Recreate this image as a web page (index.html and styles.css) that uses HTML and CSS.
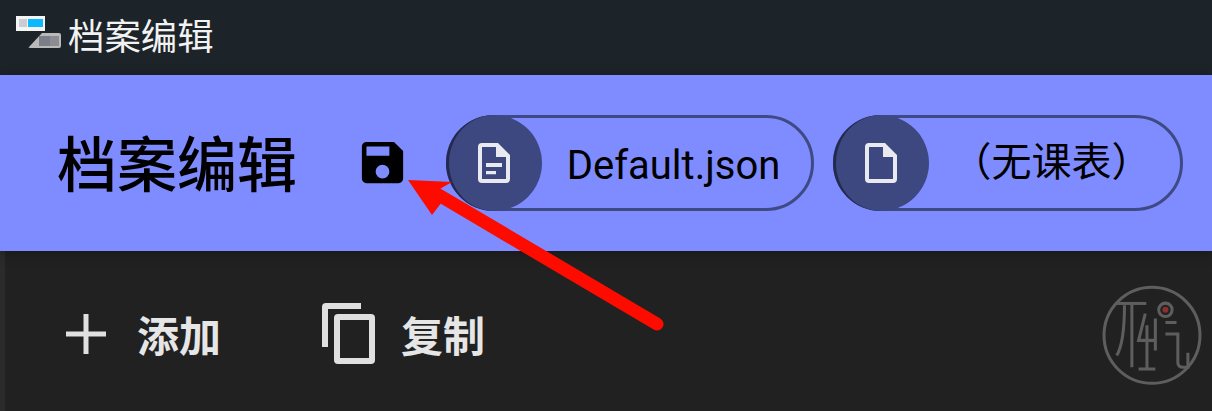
FILE: index.html
```html
<!DOCTYPE html>
<html>
<head>
    <title>档案编辑</title>
    <link rel="stylesheet" href="styles.css">
</head>
<body>
    <div class="titlebar">
        <svg class="app-icon" width="46" height="36" viewBox="0 0 46 36">
            <rect x="0" y="0" width="29" height="15" fill="#f4f4f4"/>
            <rect x="3" y="3" width="8" height="8" fill="#c9ccd4"/>
            <rect x="12" y="3" width="15" height="8" fill="#0cb8ff"/>
            <rect x="12" y="17" width="33" height="15" rx="2" fill="#b9b9b9"/>
            <path d="M12 32 L26 17 H12 Z" fill="#1c2329"/>
            <rect x="23" y="20" width="11" height="10" fill="#7b7e88"/>
            <rect x="34" y="20" width="9" height="10" fill="#8c8d92"/>
        </svg>
        <span class="app-title">档案编辑</span>
    </div>

    <div class="toolbar">
        <h1 class="page-title">档案编辑</h1>
        <svg class="save-icon" width="55" height="55" viewBox="0 0 24 24">
            <path fill-rule="evenodd" d="M17 3H5a2 2 0 0 0-2 2v14a2 2 0 0 0 2 2h14a2 2 0 0 0 2-2V7l-4-4zM12 19a3 3 0 1 1 0-6 3 3 0 0 1 0 6zM15 9H5V5h10v4z"/>
        </svg>
        <div class="chip chip-file">
            <span class="chip-icon">
                <svg width="48" height="48" viewBox="0 0 24 24">
                    <path fill-rule="evenodd" d="M6 2h8l6 6v12a2 2 0 0 1-2 2H6a2 2 0 0 1-2-2V4a2 2 0 0 1 2-2zM6 4v16h12V9h-5V4zM8 12h8v2H8zM8 16h5v1.6H8z"/>
                </svg>
            </span>
            <span class="chip-label">Default.json</span>
        </div>
        <div class="chip chip-table">
            <span class="chip-icon">
                <svg width="48" height="48" viewBox="0 0 24 24">
                    <path fill-rule="evenodd" d="M6 2h8l6 6v12a2 2 0 0 1-2 2H6a2 2 0 0 1-2-2V4a2 2 0 0 1 2-2zM6 4v16h12V9h-5V4z"/>
                </svg>
            </span>
            <span class="chip-label">（无课表）</span>
        </div>
    </div>

    <div class="content">
        <div class="action action-add">
            <svg width="40" height="40" viewBox="0 0 40 40">
                <path d="M17.5 0h5v17.5H40v5H22.5V40h-5V22.5H0v-5h17.5z"/>
            </svg>
            <span>添加</span>
        </div>
        <div class="action action-copy">
            <svg width="54" height="62" viewBox="0 0 54 62">
                <path d="M39 0v6H6v38H0V4a4 4 0 0 1 4-4z"/>
                <path fill-rule="evenodd" d="M16 11h33a4 4 0 0 1 4 4v42a4 4 0 0 1-4 4H16a4 4 0 0 1-4-4V15a4 4 0 0 1 4-4zM18 17v38h29V17z"/>
            </svg>
            <span>复制</span>
        </div>
        <svg class="seal" width="100" height="100" viewBox="36 30 298 298">
            <g fill="none" stroke="#5e5e5e" stroke-width="9">
                <circle cx="185" cy="180" r="143"/>
                <path d="M78 85H168"/>
                <path d="M103 90C103 150 100 205 80 240"/>
                <path d="M125 88V275"/>
                <path d="M165 115L145 195H195"/>
                <path d="M170 150V278M145 280H195M195 130V225"/>
                <path d="M225 142H258M225 176H262V260Q262 275 278 275H292V232"/>
                <circle cx="225" cy="104" r="20"/>
            </g>
            <circle cx="225" cy="104" r="9" fill="#8c2f2f"/>
        </svg>
    </div>

    <svg class="arrow" width="1212" height="411" viewBox="0 0 1212 411">
        <path d="M437 194L657 324" stroke="#fe0b00" stroke-width="13" stroke-linecap="round"/>
        <path d="M408 180L452 182L438 190L445 198L432 215Z" fill="#fe0b00"/>
    </svg>
</body>
</html>
```

FILE: styles.css
```css
html, body { margin: 0; padding: 0; }
body { width: 1212px; height: 411px; overflow: hidden; background: #212121; position: relative; font-family: "Noto Sans CJK SC", "Noto Sans", sans-serif; display: flex; flex-direction: column; }

.titlebar { height: 75px; flex: none; display: flex; align-items: center; padding: 0 0 7px 16px; box-sizing: border-box; background: #1c2329; color: #f2f2f2; }
.app-icon { flex: none; }
.app-title { margin-left: 6px; font-size: 36.4px; line-height: 48px; }

.toolbar { height: 176px; flex: none; display: flex; align-items: center; padding: 0 0 1px 57px; box-sizing: border-box; background: #7f8cff; color: #000; box-shadow: 0 2px 12px rgba(0, 0, 0, 0.3); position: relative; }
.page-title { margin: 0 0 3px; font-size: 60px; font-weight: 500; line-height: 80px; width: 298px; }
.save-icon { flex: none; fill: #000; margin-bottom: 1px; }
.chip { height: 96px; box-sizing: border-box; border: 3px solid #3f4a85; border-radius: 48px; display: flex; align-items: center; }
.chip-file { width: 368px; margin-left: 36px; }
.chip-table { width: 350px; margin-left: 19px; }
.chip-icon { width: 96px; height: 96px; margin-left: -3px; flex: none; box-sizing: border-box; padding-right: 3px; border-radius: 50%; background: #3d4780; border-left: 3px solid #232a50; display: flex; align-items: center; justify-content: center; fill: #e8eaf0; }
.chip-label { flex: 1; text-align: center; padding-right: 6px; font-family: "Roboto", "Noto Sans CJK SC", sans-serif; font-size: 40px; line-height: 52px; }
.chip-file .chip-label { padding-top: 6px; }
.chip-table .chip-label { padding-top: 0; }

.content { flex: 1; display: flex; align-items: center; border-left: 5px solid #2b2b2b; padding: 5px 10px 0 61px; }
.action { display: flex; align-items: center; color: #e6e6e6; fill: #e0e0e0; font-size: 42px; font-weight: 700; }
.action span { line-height: 54px; }
.action-add span { margin-left: 31px; }
.action-copy { margin-left: 101px; }
.action-copy span { margin-left: 25px; }
.seal { margin: 3px 0 0 auto; flex: none; }

.arrow { position: absolute; left: 0; top: 0; pointer-events: none; }
```
